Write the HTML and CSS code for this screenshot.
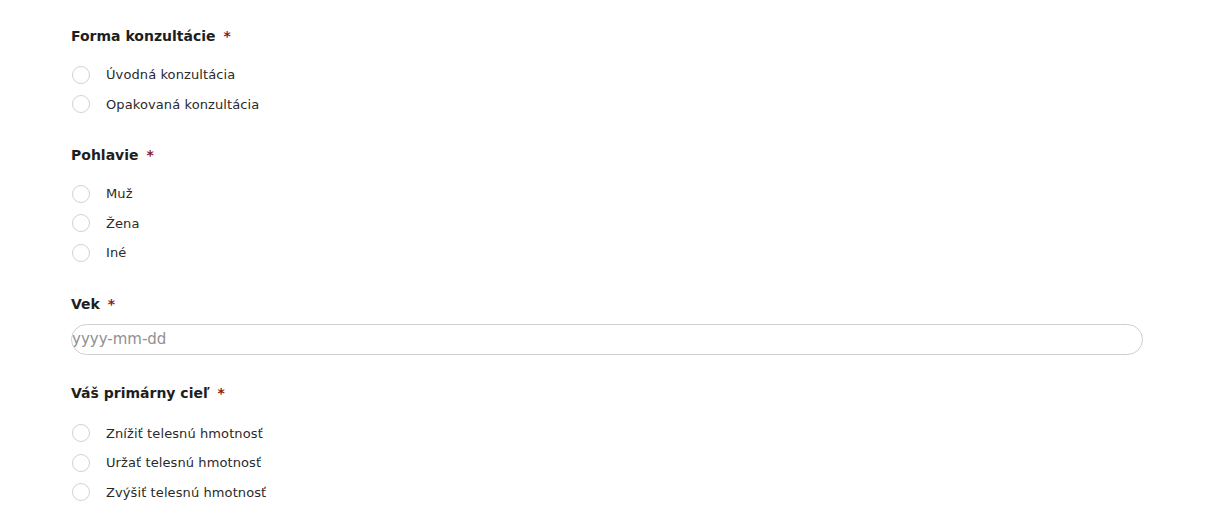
FILE: index.html
```html
<!DOCTYPE html>
<html lang="sk">
  <head>
    <meta charset="UTF-8" />
    <meta name="viewport" content="width=device-width, initial-scale=1.0" />
    <title>Formulár</title>
    <link rel="stylesheet" href="styles.css">
  </head>
  <body>
    <form class="form">
      <div class="group">
        <div class="label">Forma konzultácie <span class="req">*</span></div>
        <ul class="options">
          <li><span class="radio"></span>Úvodná konzultácia</li>
          <li><span class="radio"></span>Opakovaná konzultácia</li>
        </ul>
      </div>
      <div class="group">
        <div class="label">Pohlavie <span class="req">*</span></div>
        <ul class="options">
          <li><span class="radio"></span>Muž</li>
          <li><span class="radio"></span>Žena</li>
          <li><span class="radio"></span>Iné</li>
        </ul>
      </div>
      <div class="group group-input">
        <div class="label label-input">Vek <span class="req">*</span></div>
        <input class="field" type="text" placeholder="yyyy-mm-dd" />
      </div>
      <div class="group">
        <div class="label label-wide">Váš primárny cieľ <span class="req">*</span></div>
        <ul class="options">
          <li><span class="radio"></span>Znížiť telesnú hmotnosť</li>
          <li><span class="radio"></span>Uržať telesnú hmotnosť</li>
          <li><span class="radio"></span>Zvýšiť telesnú hmotnosť</li>
        </ul>
      </div>
    </form>
  </body>
</html>
```

FILE: styles.css
```css
* {
  margin: 0;
  padding: 0;
  box-sizing: border-box;
}
body {
  background: #fff;
  font-family: "DejaVu Sans", "Open Sans", sans-serif;
  color: #222;
}
.form {
  padding: 26px 77px 0 71px;
}
.group {
  margin-bottom: 26px;
}
.group-input {
  margin-bottom: 28px;
}
.label {
  height: 20px;
  line-height: 20px;
  font-size: 14px;
  font-weight: bold;
  color: #1e1e1e;
  margin-bottom: 14px;
}
.label-input {
  margin-bottom: 10px;
}
.label-wide {
  margin-bottom: 16px;
}
.req {
  color: #8a1c1c;
  margin-left: 3px;
}
.options {
  list-style: none;
}
.options li {
  display: flex;
  align-items: center;
  height: 29.5px;
  font-size: 13px;
  letter-spacing: 0.1px;
  color: #2a2a2a;
}
.radio {
  width: 18px;
  height: 18px;
  border: 1px solid #d2d2d2;
  border-radius: 50%;
  margin-left: 1px;
  margin-right: 16px;
  flex-shrink: 0;
}
.field {
  display: block;
  width: 100%;
  height: 31px;
  border: 1px solid #cfcfcf;
  border-radius: 16px;
  padding: 0;
  font-family: inherit;
  font-size: 15px;
  outline: none;
}
.field::placeholder {
  color: #909090;
}
```
